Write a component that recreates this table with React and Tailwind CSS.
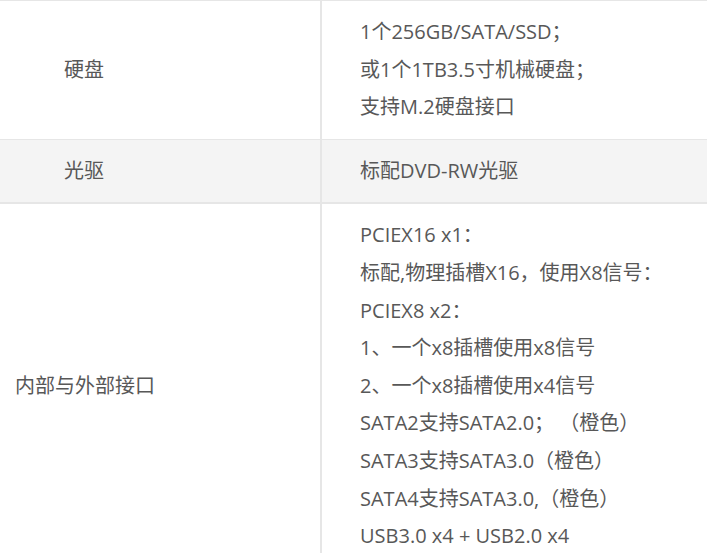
const rows = [
  {
    label: '硬盘',
    lines: ['1个256GB/SATA/SSD；', '或1个1TB3.5寸机械硬盘；', '支持M.2硬盘接口'],
    labelPad: 'pl-[64px]',
  },
  {
    label: '光驱',
    lines: ['标配DVD-RW光驱'],
    labelPad: 'pl-[64px]',
    shaded: true,
    thick: true,
  },
  {
    label: '内部与外部接口',
    lines: [
      'PCIEX16 x1：',
      '标配,物理插槽X16，使用X8信号：',
      'PCIEX8 x2：',
      '1、一个x8插槽使用x8信号',
      '2、一个x8插槽使用x4信号',
      'SATA2支持SATA2.0； （橙色）',
      'SATA3支持SATA3.0（橙色）',
      'SATA4支持SATA3.0,（橙色）',
      'USB3.0 x4 + USB2.0 x4',
    ],
    labelPad: 'pl-[15px]',
    last: true,
  },
];

export default function App() {
  return (
    <div
      className="w-[707px] h-[553px] overflow-hidden bg-white text-[20px] text-[#585858]"
      style={{ fontFamily: '"Open Sans", "Noto Sans CJK SC", sans-serif' }}
    >
      <div className="border-t border-[#e6e6e6]">
        {rows.map((r) => (
          <div
            key={r.label}
            className={`flex ${r.shaded ? 'bg-[#f4f4f4]' : 'bg-white'} ${
              r.last ? '' : r.thick ? 'border-b-2 border-[#e6e6e6]' : 'border-b border-[#e6e6e6]'
            }`}
          >
            <div className={`w-[320px] shrink-0 flex items-center ${r.labelPad}`}>
              <span className="leading-[37.6px]">{r.label}</span>
            </div>
            <div className="flex-1 border-l-2 border-[#e6e6e6] pl-[38px] pt-[12px] pb-[13px]">
              {r.lines.map((l) => (
                <div key={l} className="h-[37.6px] leading-[37.6px] whitespace-nowrap">
                  {l}
                </div>
              ))}
            </div>
          </div>
        ))}
      </div>
    </div>
  );
}
